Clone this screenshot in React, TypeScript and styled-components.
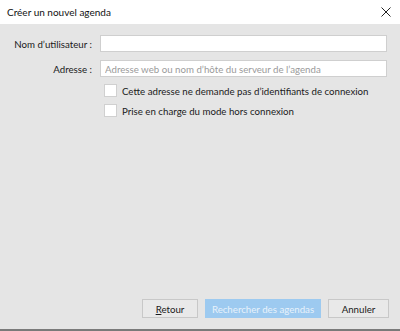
import React from 'react';
import styled, { createGlobalStyle } from 'styled-components';

const GlobalStyle = createGlobalStyle`
  html, body {
    margin: 0;
    padding: 0;
  }

  body {
    font-family: Lato, "Noto Sans", sans-serif;
    font-size: 9.7px;
    color: #1a1a1a;
  }
`;

const Dialog = styled.div`
  width: 400px;
  height: 331px;
  display: flex;
  flex-direction: column;
  background: #e5e5e5;
  border-bottom: 2px solid #7a7a7a;
  box-sizing: border-box;
`;

const TitleBar = styled.div`
  height: 24px;
  background: #ffffff;
  display: flex;
  align-items: center;
  justify-content: space-between;
  padding: 0 6px 0 7px;
  flex-shrink: 0;
`;

const Title = styled.div`
  color: #111;
  font-size: 10px;
`;

const Close = styled.button`
  width: 16px;
  height: 16px;
  border: none;
  background: none;
  padding: 0;
  display: flex;
  align-items: center;
  justify-content: center;
`;

const Body = styled.div`
  flex: 1;
  display: flex;
  flex-direction: column;
  padding: 11px 11px 11px 9px;
`;

const Form = styled.div`
  display: grid;
  grid-template-columns: 83px minmax(0, 1fr);
  column-gap: 8px;
  row-gap: 8px;
  align-items: center;
  margin-right: 2px;
`;

const Label = styled.label`
  text-align: right;
  white-space: nowrap;
`;

const Input = styled.input`
  height: 17px;
  box-sizing: border-box;
  border: 1px solid #cfcfcf;
  background: #fff;
  font: inherit;
  padding: 0 4px;
  outline: none;

  &::placeholder {
    color: #9a9a9a;
  }
`;

const CheckRow = styled.label`
  grid-column: 2;
  display: flex;
  align-items: center;
  gap: 5px;
  padding-left: 4px;
  height: 13px;
  margin-top: -1px;
  white-space: nowrap;
`;

const Box = styled.span`
  width: 13px;
  height: 13px;
  background: #fff;
  border: 1px solid #d0d0d0;
  box-sizing: border-box;
  flex-shrink: 0;
`;

const Spacer = styled.div`
  flex: 1;
`;

const Buttons = styled.div`
  display: flex;
  justify-content: flex-end;
  gap: 7px;
`;

const Button = styled.button<{ $width: number; $primary?: boolean }>`
  width: ${(p) => p.$width}px;
  height: 19px;
  box-sizing: border-box;
  font: inherit;
  padding: 0;
  background: ${(p) => (p.$primary ? '#9dcaf0' : '#e9e9e9')};
  color: ${(p) => (p.$primary ? '#e8f2fb' : '#1a1a1a')};
  border: 1px solid ${(p) => (p.$primary ? '#9dcaf0' : '#c8c8c8')};

  u {
    text-decoration: underline;
  }
`;

export default function App () {
  return (
    <>
      <GlobalStyle />
      <Dialog>
        <TitleBar>
          <Title>Créer un nouvel agenda</Title>
          <Close aria-label='Fermer'>
            <svg width='10' height='10' viewBox='0 0 10 10'>
              <path d='M0.5 0.5 L9.5 9.5 M9.5 0.5 L0.5 9.5' stroke='#222' strokeWidth='1' />
            </svg>
          </Close>
        </TitleBar>
        <Body>
          <Form>
            <Label>Nom d’utilisateur :</Label>
            <Input />
            <Label>Adresse :</Label>
            <Input placeholder='Adresse web ou nom d’hôte du serveur de l’agenda' />
            <CheckRow>
              <Box />
              Cette adresse ne demande pas d’identifiants de connexion
            </CheckRow>
            <CheckRow>
              <Box />
              Prise en charge du mode hors connexion
            </CheckRow>
          </Form>
          <Spacer />
          <Buttons>
            <Button $width={56}><u>R</u>etour</Button>
            <Button $width={116} $primary>Rechercher des agendas</Button>
            <Button $width={61}>Annuler</Button>
          </Buttons>
        </Body>
      </Dialog>
    </>
  );
}
